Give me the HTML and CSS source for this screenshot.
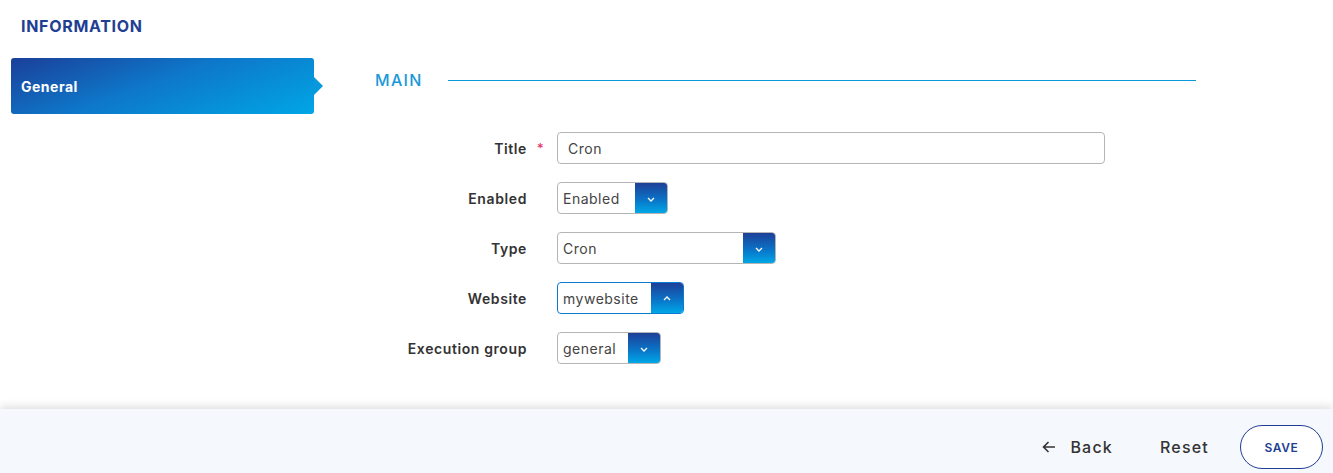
FILE: index.html
```html
<!DOCTYPE html>
<html lang="en">
<head>
<meta charset="utf-8">
<title>Information</title>
<link rel="stylesheet" href="styles.css">
</head>
<body>
<div class="page">
  <div class="main">
    <h1 class="heading">INFORMATION</h1>
    <div class="content">
      <aside class="sidebar">
        <div class="tab">General</div>
      </aside>
      <section class="form">
        <div class="section-head">
          <span class="section-title">MAIN</span>
          <span class="section-line"></span>
        </div>
        <div class="rows">
          <div class="row">
            <label class="label">Title</label>
            <span class="req">*</span>
            <div class="input input-title">Cron</div>
          </div>
          <div class="row">
            <label class="label">Enabled</label>
            <span class="req"></span>
            <div class="select w-enabled">
              <span class="select-value">Enabled</span>
              <span class="select-btn"><svg width="10" height="10" viewBox="0 0 10 10"><path d="M2 4 L5 7 L8 4" fill="none" stroke="#fff" stroke-width="1.3"/></svg></span>
            </div>
          </div>
          <div class="row">
            <label class="label">Type</label>
            <span class="req"></span>
            <div class="select w-type">
              <span class="select-value">Cron</span>
              <span class="select-btn"><svg width="10" height="10" viewBox="0 0 10 10"><path d="M2 4 L5 7 L8 4" fill="none" stroke="#fff" stroke-width="1.3"/></svg></span>
            </div>
          </div>
          <div class="row">
            <label class="label">Website</label>
            <span class="req"></span>
            <div class="select w-website focused">
              <span class="select-value">mywebsite</span>
              <span class="select-btn"><svg width="10" height="10" viewBox="0 0 10 10"><path d="M2 6 L5 3 L8 6" fill="none" stroke="#fff" stroke-width="1.3"/></svg></span>
            </div>
          </div>
          <div class="row">
            <label class="label">Execution group</label>
            <span class="req"></span>
            <div class="select w-group">
              <span class="select-value">general</span>
              <span class="select-btn"><svg width="10" height="10" viewBox="0 0 10 10"><path d="M2 4 L5 7 L8 4" fill="none" stroke="#fff" stroke-width="1.3"/></svg></span>
            </div>
          </div>
        </div>
      </section>
    </div>
  </div>
  <footer class="footer">
    <a class="link back"><svg width="16" height="16" viewBox="0 0 16 16"><path d="M14 8 H2.5 M7.5 3 L2.5 8 L7.5 13" fill="none" stroke="#333" stroke-width="1.6"/></svg><span>Back</span></a>
    <a class="link reset">Reset</a>
    <button class="save">SAVE</button>
  </footer>
</div>
</body>
</html>
```

FILE: styles.css
```css
* { box-sizing: border-box; }
html, body { margin: 0; padding: 0; }
body {
  font-family: Inter, "Open Sans", "Liberation Sans", sans-serif;
  color: #333;
  background: #fff;
}
.page {
  height: 473px;
  display: flex;
  flex-direction: column;
}
.main { flex: 1; }
.heading {
  margin: 0;
  padding: 15px 0 0 21px;
  height: 58px;
  font-size: 16px;
  line-height: 22px;
  font-weight: 700;
  color: #213e93;
  letter-spacing: 0.7px;
}
.content {
  display: flex;
}
.sidebar {
  width: 375px;
  padding-left: 11px;
}
.tab {
  position: relative;
  width: 303px;
  height: 56px;
  border-radius: 3px;
  background: linear-gradient(160deg, #1b3f99 0%, #0e76c8 45%, #00a6e6 100%);
  color: #fff;
  font-size: 14px;
  font-weight: 700;
  letter-spacing: 0.5px;
  padding-left: 10px;
  display: flex;
  align-items: center;
}
.tab::after {
  content: "";
  position: absolute;
  right: -9px;
  top: 19px;
  border-top: 9px solid transparent;
  border-bottom: 9px solid transparent;
  border-left: 9px solid #0799dc;
}
.form { width: 821px; }
.section-head {
  display: flex;
  align-items: center;
  height: 44px;
  gap: 25px;
}
.section-title {
  font-size: 16px;
  font-weight: 500;
  color: #1a98d8;
  letter-spacing: 1.3px;
}
.section-line {
  flex: 1;
  height: 0;
  border-top: 1px solid #0a9ad9;
  margin-top: 1px;
}
.rows {
  margin-top: 30px;
  display: flex;
  flex-direction: column;
  gap: 18px;
}
.row {
  display: flex;
  align-items: center;
  height: 32px;
}
.label {
  width: 152px;
  text-align: right;
  font-size: 14px;
  font-weight: 600;
  color: #333;
  white-space: nowrap;
  letter-spacing: 0.6px;
}
.req {
  width: 30px;
  color: #e0245e;
  font-size: 13px;
  padding-left: 10px;
  line-height: 1;
}
.input {
  height: 32px;
  border: 1px solid #b5b5b5;
  border-radius: 4px;
  padding-left: 10px;
  display: flex;
  align-items: center;
  font-size: 14px;
  color: #444;
  letter-spacing: 0.5px;
}
.input-title { width: 548px; }
.select {
  height: 32px;
  border: 1px solid #b5b5b5;
  border-radius: 4px;
  display: flex;
  overflow: hidden;
}
.select.focused { border-color: #0a7bd1; }
.select-value {
  flex: 1;
  padding-left: 5px;
  display: flex;
  align-items: center;
  font-size: 14px;
  color: #444;
  white-space: nowrap;
  letter-spacing: 0.5px;
}
.select-btn {
  flex: 0 0 32px;
  background: linear-gradient(180deg, #1e3f98 0%, #0a73c6 55%, #00a7e7 100%);
  display: flex;
  align-items: center;
  justify-content: center;
  padding-top: 2px;
}
.w-enabled { width: 111px; }
.w-type { width: 219px; }
.w-website { width: 127px; }
.w-group { width: 104px; }
.footer {
  height: 64px;
  background: #f5f8fd;
  box-shadow: 0 -3px 8px rgba(0, 0, 0, 0.12);
  display: flex;
  align-items: center;
  justify-content: flex-end;
  padding-right: 10px;
  padding-top: 12px;
}
.link {
  font-size: 16px;
  font-weight: 500;
  color: #333;
  display: flex;
  align-items: center;
  cursor: pointer;
  letter-spacing: 1.2px;
}
.back { gap: 13px; margin-right: 47px; }
.reset { margin-right: 31px; }
.save {
  width: 83px;
  height: 44px;
  border: 1px solid #213e93;
  border-radius: 22px;
  background: #fff;
  color: #213e93;
  font-family: inherit;
  font-size: 12px;
  font-weight: 600;
  letter-spacing: 0.6px;
}
```
